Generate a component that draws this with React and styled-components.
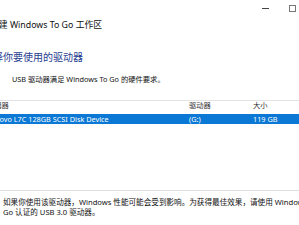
import React from "react";
import styled, { createGlobalStyle } from "styled-components";

const GlobalStyle = createGlobalStyle`
  html, body { margin: 0; padding: 0; background: #ffffff; }
  body {
    width: 299px;
    height: 225px;
    overflow: hidden;
    font-family: "Noto Sans", "Noto Sans CJK SC", sans-serif;
    color: #111;
  }
`;

const Window = styled.div`
  width: 299px;
  height: 225px;
  display: flex;
  flex-direction: column;
  overflow: hidden;
  background: #ffffff;
`;

const CaptionBar = styled.div`
  height: 17px;
  display: flex;
  flex-shrink: 0;
  padding-left: 252px;
`;

const CaptionButton = styled.div`
  flex: 0 0 27px;
  height: 17px;
  display: flex;
  align-items: center;
  justify-content: center;
`;

const MinGlyph = styled.span`
  width: 7px;
  height: 1px;
  background: #444;
  margin-top: -1px;
`;

const MaxGlyph = styled.span`
  width: 5px;
  height: 5px;
  border: 1px solid #777;
  margin-top: -1px;
`;

const WizardTitle = styled.div`
  height: 16px;
  line-height: 16px;
  font-size: 8.8px;
  white-space: nowrap;
  margin-left: -10px;
  color: #111;
`;

const Heading = styled.div`
  margin-top: 17px;
  height: 14px;
  line-height: 14px;
  font-size: 10px;
  white-space: nowrap;
  margin-left: -17px;
  color: #1f3d8f;
`;

const Body = styled.div`
  margin-top: 10px;
  height: 10px;
  line-height: 10px;
  font-size: 7.3px;
  white-space: nowrap;
  margin-left: 12px;
  color: #111;
`;

const List = styled.div`
  margin-top: 16px;
  margin-left: -16px;
  flex: 1;
  border-top: 1px solid #e3e3e3;
  display: flex;
  flex-direction: column;
`;

const Row = styled.div`
  display: grid;
  grid-template-columns: 202px 64px 80px;
  height: ${(p) => (p.$header ? 9 : 10)}px;
  line-height: ${(p) => (p.$header ? 9 : 10)}px;
  margin-top: ${(p) => (p.$header ? 0 : 4)}px;
  font-size: 7.3px;
  white-space: nowrap;
  background: ${(p) => (p.$selected ? "#0a78d4" : "transparent")};
  color: ${(p) => (p.$selected ? "#ffffff" : p.$header ? "#333" : "#111")};
`;

const Cell = styled.span`
  padding-left: 3px;
  overflow: hidden;
`;

const Footer = styled.div`
  flex-shrink: 0;
  height: 35px;
  box-sizing: border-box;
  border-top: 1px solid #dedede;
  padding: 6px 0 0 3px;
  font-size: 7.6px;
  line-height: 10px;
  white-space: nowrap;
  color: #111;
`;

export default function App() {
  return (
    <>
      <GlobalStyle />
      <Window>
        <CaptionBar>
          <CaptionButton><MinGlyph /></CaptionButton>
          <CaptionButton><MaxGlyph /></CaptionButton>
          <CaptionButton />
        </CaptionBar>
        <WizardTitle>创建 Windows To Go 工作区</WizardTitle>
        <Heading>选择你要使用的驱动器</Heading>
        <Body>USB 驱动器满足 Windows To Go 的硬件要求。</Body>
        <List>
          <Row $header>
            <Cell>存储器</Cell>
            <Cell>驱动器</Cell>
            <Cell>大小</Cell>
          </Row>
          <Row $selected>
            <Cell>Lenovo L7C 128GB SCSI Disk Device</Cell>
            <Cell>(G:)</Cell>
            <Cell>119 GB</Cell>
          </Row>
        </List>
        <Footer>
          如果你使用该驱动器，Windows 性能可能会受到影响。为获得最佳效果，请使用 Windows
          <br />
          Go 认证的 USB 3.0 驱动器。
        </Footer>
      </Window>
    </>
  );
}
